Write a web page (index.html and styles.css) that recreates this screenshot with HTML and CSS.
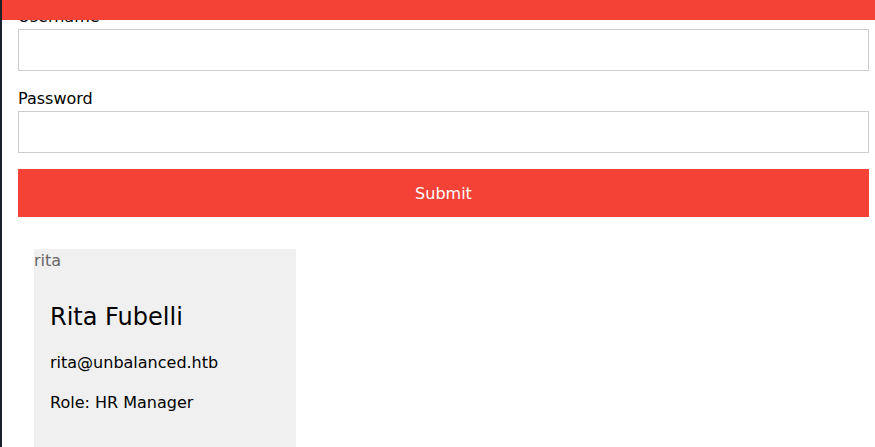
FILE: index.html
```html
<!DOCTYPE html>
<html lang="en">
<head>
  <meta charset="UTF-8" />
  <meta name="viewport" content="width=device-width, initial-scale=1.0"/>
  <title>Employee Login</title>
  <link rel="stylesheet" href="styles.css">
</head>
<body>
  <div class="topbar"></div>
  <main class="page">
    <form class="login-form">
      <label for="username">Username</label>
      <input type="text" id="username" name="username"/>
      <label for="password">Password</label>
      <input type="password" id="password" name="password"/>
      <button type="submit">Submit</button>
    </form>

    <div class="employees">
      <div class="employee-card">
        <span class="avatar">rita</span>
        <div class="employee-info">
          <h2>Rita Fubelli</h2>
          <p>rita@unbalanced.htb</p>
          <p>Role: HR Manager</p>
        </div>
      </div>
    </div>
  </main>
</body>
</html>
```

FILE: styles.css
```css
html, body {
  height: 100%;
}
body {
  font-family: "DejaVu Sans", sans-serif;
  font-size: 16px;
  line-height: 1.5;
  margin: 0;
  background: #ffffff;
  border-left: 2px solid #1c2029;
  color: #000;
}
.topbar {
  position: fixed;
  top: 0;
  left: 2px;
  right: 0;
  height: 20px;
  background: #f44336;
  z-index: 10;
}
.page {
  padding: 4px 6px 0 16px;
}
.login-form label {
  display: block;
  height: 23px;
  padding-top: 1px;
}
.login-form input {
  display: block;
  box-sizing: border-box;
  width: 100%;
  height: 42px;
  margin: 1px 0 15px;
  border: 1px solid #ccc;
  padding: 4px 8px;
  font-size: 16px;
}
.login-form button {
  display: block;
  box-sizing: border-box;
  width: 100%;
  height: 48px;
  margin-top: 16px;
  border: none;
  background: #f44336;
  color: #fff;
  font-family: "DejaVu Sans", sans-serif;
  font-size: 16px;
  cursor: pointer;
}
.employees {
  padding: 32px 16px 0;
}
.employee-card {
  width: 262px;
  background: #f0f0f0;
}
.avatar {
  display: block;
  height: 24px;
  color: #666;
}
.employee-info {
  padding: 26px 16px 24px;
}
.employee-info h2 {
  font-size: 24px;
  font-weight: normal;
  margin: 0 0 16px;
}
.employee-info p {
  margin: 0 0 16px;
}
```
